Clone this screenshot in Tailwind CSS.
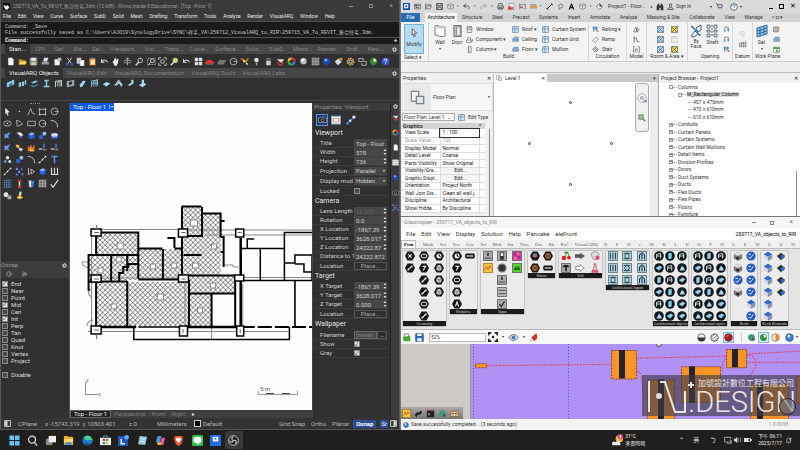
<!DOCTYPE html>
<html lang="zh-Hant">
<head>
    <meta charset="utf-8">
    <meta name="viewport" content="width=device-width, initial-scale=1">
    <title>Desktop</title>
    <script src="https://cdn.jsdelivr.net/npm/@tailwindcss/browser@4"></script>
</head>
<body class="h-screen overflow-hidden flex flex-col bg-[#1f1e1c] font-[Roboto,'Noto_Sans_CJK_TC',sans-serif] text-[5px] leading-none">

<!-- icon shapes -->
<svg class="hidden">
    <symbol id="new" viewBox="0 0 12 12"><path fill="#f4f4f4" d="M3 1h5l2 2v8H3z"/><path fill="#999" d="M8 1l2 2H8z"/></symbol>
    <symbol id="open" viewBox="0 0 12 12"><path fill="#c98a1a" d="M1 3h4l1 1h4v6H1z"/><path fill="#ffd566" d="M3 6h9l-2 4H1z"/></symbol>
    <symbol id="save" viewBox="0 0 12 12"><path fill="#8a8a8a" d="M1 1h10v10H1z"/><path fill="#eee" d="M3 1h6v4H3z"/><path fill="#d8cf9a" d="M3 7h6v4H3z"/></symbol>
    <symbol id="print" viewBox="0 0 12 12"><path fill="#ddd" d="M4 1h6L8 6H3z"/><path fill="#999" d="M1 6h9l1 4H1z"/></symbol>
    <symbol id="docprops" viewBox="0 0 12 12"><path fill="#eee" d="M2 3h7v8H2z"/><path fill="#bbb" d="M6 1h5v4H6z"/></symbol>
    <symbol id="cut" viewBox="0 0 12 12"><path stroke="#e8e8e8" d="M3 1l5 7M9 1L4 8"/><g fill="none" stroke="#4c7fe0"><circle cx="3" cy="9.500" r="1.500"/><circle cx="9" cy="9.500" r="1.500"/></g></symbol>
    <symbol id="copy" viewBox="0 0 12 12"><path fill="#ccc" d="M1 1h6v8H1z"/><path fill="#fff" stroke="#555" stroke-width=".5" d="M5 4h6v8H5z"/></symbol>
    <symbol id="paste" viewBox="0 0 12 12"><path fill="#e0a030" d="M2 2h8v9H2z"/><path fill="#f7e3b0" d="M4 4h5v6H4z"/><path fill="#888" d="M4 1h4v2H4z"/></symbol>
    <symbol id="undo" viewBox="0 0 12 12"><path fill="none" stroke="#ddd" stroke-width="1.400" d="M2 7c2-4 6-4 8 0M2 3v4h4"/></symbol>
    <symbol id="hand" viewBox="0 0 12 12"><path fill="#eee" d="M2 6l1-1 1 1V2h1v3l1-4h1v4l2-3 1 1-1 6-2 3H5z"/></symbol>
    <symbol id="orbit" viewBox="0 0 12 12"><g fill="none" stroke="#bbb"><ellipse cx="6" cy="6" rx="5" ry="2"/><path d="M6 1v10M4 3l2-2 2 2"/></g></symbol>
    <symbol id="mag" viewBox="0 0 12 12"><circle cx="7" cy="4.500" r="3" fill="none" stroke="#ddd" stroke-width="1.200"/><path stroke="#ddd" stroke-width="1.800" d="M5 7l-4 4"/></symbol>
    <symbol id="magbox" viewBox="0 0 12 12"><path fill="none" stroke="#bbb" stroke-dasharray="2 1" d="M1 2h10v8H1z"/><circle cx="7" cy="5" r="2.500" fill="none" stroke="#eee"/><path stroke="#eee" d="M5 7l-4 4"/></symbol>
    <symbol id="magall" viewBox="0 0 12 12"><path fill="none" stroke="#eee" d="M1 4V1h3M8 1h3v3M11 8v3H8M4 11H1V8"/><circle cx="6" cy="6" r="2.500" fill="none" stroke="#eee"/></symbol>
    <symbol id="magsel" viewBox="0 0 12 12"><circle cx="7" cy="4.500" r="3" fill="#d9dc3a" stroke="#ddd"/><path stroke="#ddd" stroke-width="1.800" d="M5 7l-4 4"/></symbol>
    <symbol id="grid4" viewBox="0 0 12 12"><path fill="#ddd" d="M1 1h4.500v4.500H1zM6.500 1H11v4.500H6.500zM1 6.500h4.500V11H1zM6.500 6.500H11V11H6.500z"/></symbol>
    <symbol id="car" viewBox="0 0 12 12"><path fill="#d33" d="M0 7l3-3h5l4 3v2H0z"/><path fill="#888" d="M1 9h10v1H1z"/></symbol>
    <symbol id="plane" viewBox="0 0 12 12"><path fill="#777" d="M3 4h9l-3 6H0z"/><path stroke="#d44" d="M5 3v4"/><path stroke="#4a4" d="M5 7h4"/></symbol>
    <symbol id="circ" viewBox="0 0 12 12"><circle cx="6" cy="6" r="4.500" fill="none" stroke="#ccc"/><path stroke="#ccc" d="M6 6h5"/></symbol>
    <symbol id="curvesel" viewBox="0 0 12 12"><path stroke="#e07b28" stroke-width="2" d="M1 3h4M7 7l4-5"/><path fill="#ffd040" d="M4 4h3v3H4z"/><path fill="#eee" d="M7 7l4 2-2 2z"/></symbol>
    <symbol id="bulb" viewBox="0 0 12 12"><circle cx="6" cy="4" r="3" fill="#ddd"/><path fill="#999" d="M5 7h2v4H5z"/></symbol>
    <symbol id="lock" viewBox="0 0 12 12"><path fill="none" stroke="#999" d="M4 5V2h4v3"/><path fill="#ccc" d="M3 5h6v6H3z"/></symbol>
    <symbol id="layers" viewBox="0 0 12 12"><path fill="#ddd" d="M1 3h10l-4 5z"/><path fill="#d33" d="M1 5l5 5 5-5-2 5-3 2-3-2z"/></symbol>
    <symbol id="wheel" viewBox="0 0 12 12"><g fill="none" stroke-width="2.500"><path stroke="#e33" d="M6 2a4 4 0 014 4"/><path stroke="#4a7bff" d="M10 6a4 4 0 01-4 4"/><path stroke="#3b3" d="M6 10a4 4 0 01-4-4"/><path stroke="#eb3" d="M2 6a4 4 0 014-4"/></g></symbol>
    <symbol id="ball" viewBox="0 0 12 12"><circle cx="6" cy="5.500" r="4.300" fill="#bbb"/><circle cx="5" cy="4" r="2" fill="#fff"/></symbol>
    <symbol id="mesh" viewBox="0 0 12 12"><path fill="#aaa" d="M1 1h10v10H1z"/><path stroke="#444" stroke-width=".7" d="M1 4h10M1 8h10M4 1v10M8 1v10"/></symbol>
    <symbol id="blue" viewBox="0 0 12 12"><circle cx="6" cy="6" r="4.600" fill="#1e49b8"/><circle cx="5" cy="4" r="1.800" fill="#8fb4ff"/></symbol>
    <symbol id="spot" viewBox="0 0 12 12"><path fill="#ddd" d="M1 6l5-4 4 5-5 4z"/><path fill="#e39a35" d="M6 2l5-1v5z"/></symbol>
    <symbol id="gearY" viewBox="0 0 12 12"><circle cx="6" cy="6" r="4" fill="none" stroke="#e8b04a" stroke-width="2.500" stroke-dasharray="2 1"/><circle cx="6" cy="6" r="2" fill="none" stroke="#eee"/></symbol>
    <symbol id="dim" viewBox="0 0 12 12"><path fill="none" stroke="#ccc" d="M1 2v4h6V2H1M5 8v3h6V6H8"/></symbol>
    <symbol id="green" viewBox="0 0 12 12"><circle cx="6" cy="6" r="4.600" fill="#2f8f2c"/><path fill="#eee" d="M6 2a4 4 0 014 4L6 6z"/></symbol>
    <symbol id="help" viewBox="0 0 12 12"><circle cx="6" cy="6" r="5" fill="#3457d8"/><path fill="none" stroke="#fff" stroke-width="1.300" d="M4 5c0-3 4-3 4-1 0 1.500-2 1.500-2 3M6 8.500v1"/></symbol>

    <symbol id="va1" viewBox="0 0 12 12"><path fill="#86cbe4" d="M1 5l9-4 1 1v5l-9 4-1-1z"/><path fill="#2f7391" d="M4 7l4-2v3L4 10z"/></symbol>
    <symbol id="va2" viewBox="0 0 12 12"><path fill="#86cbe4" d="M1 5l3-1v6l-3 1zM5 4l3-1v6L5 10zM9 2l2-1v6L9 8z"/></symbol>
    <symbol id="va3" viewBox="0 0 12 12"><path fill="#86cbe4" d="M1 5l6-3 4 1-6 3z"/><path fill="#3f8aa8" d="M1 8l5 1 5-3v2l-6 3-4-1z"/></symbol>
    <symbol id="va4" viewBox="0 0 12 12"><path fill="#86cbe4" d="M3 1h6v2H3zM5 3h2v6H5zM2 9h8v2H2z"/></symbol>
    <symbol id="va5" viewBox="0 0 12 12"><path fill="none" stroke="#c9cfd2" stroke-width="1.300" d="M2 11V3l8-1v8M5 10V4l3-1v7"/></symbol>
    <symbol id="va6" viewBox="0 0 12 12"><path fill="#9aa5aa" d="M1 3l10-2v8L1 11z"/><path fill="#2c3336" d="M4 4l4-1v4L4 8z"/></symbol>
    <symbol id="va7" viewBox="0 0 12 12"><path fill="#9fdbf2" d="M2 8l5-6 3 1-4 7-3 1z"/></symbol>
    <symbol id="va8" viewBox="0 0 12 12"><path fill="none" stroke="#86cbe4" stroke-width="1.200" d="M1 3l10-2M2 3v8M5 2v8M8 2v8M10 1v8M2 6l8-1"/></symbol>
    <symbol id="va9" viewBox="0 0 12 12"><path fill="#9fdbf2" d="M1 7l5-3 5 2-5 4z"/></symbol>
    <symbol id="va10" viewBox="0 0 12 12"><path fill="none" stroke="#a9cfdc" stroke-width="1.600" d="M1 9l5-7 5 6M3 9l4-5 3 6"/></symbol>
    <symbol id="va11" viewBox="0 0 12 12"><path fill="#9fdbf2" d="M7 1h3v5L5 9l-3-1 5-3z"/></symbol>
    <symbol id="va12" viewBox="0 0 12 12"><path fill="#9fdbf2" d="M5 1h3v4l3 2-5 4-5-3 4-2z"/></symbol>

    <symbol id="arrow" viewBox="0 0 12 12"><path fill="#eee" d="M3 1l6 6-3 .2L7.500 11 6 11.500 4.500 8 3 9.500z"/></symbol>
    <symbol id="point" viewBox="0 0 12 12"><circle cx="6" cy="6" r="1" fill="#ccc"/></symbol>
    <symbol id="poly" viewBox="0 0 12 12"><path fill="none" stroke="#ccc" d="M1 11l4-9 2 6 4 2"/></symbol>
    <symbol id="ctrl" viewBox="0 0 12 12"><path fill="none" stroke="#ccc" d="M2 3h8v7H2z"/><path fill="#ccc" d="M1 2h2v2H1zM9 2h2v2H9zM1 9h2v2H1zM9 9h2v2H9z"/></symbol>
    <symbol id="ell" viewBox="0 0 12 12"><ellipse cx="6" cy="6" rx="5" ry="3.500" fill="none" stroke="#ccc"/><path fill="#ccc" d="M5 5h2v2H5z"/></symbol>
    <symbol id="tri" viewBox="0 0 12 12"><path fill="none" stroke="#ccc" d="M2 2c4 0 7 3 8 5L3 10z"/></symbol>
    <symbol id="rect" viewBox="0 0 12 12"><path fill="none" stroke="#ccc" d="M1 3h10v6H1z"/></symbol>
    <symbol id="arc" viewBox="0 0 12 12"><path fill="none" stroke="#ccc" stroke-width="1.300" d="M1 2c6 0 9 3 9 9"/></symbol>
    <symbol id="srf" viewBox="0 0 12 12"><path fill="#3f6fe0" d="M2 4l7-2-2 7-5 1z"/><path stroke="#dfe8ff" stroke-width=".8" d="M2 9l7-7M2 4l6 6"/></symbol>
    <symbol id="srf2" viewBox="0 0 12 12"><path fill="#e8eeff" d="M2 2h6l3 4-3 1-3-2z"/><path fill="#3f6fe0" d="M5 7l5-1-2 4z"/></symbol>
    <symbol id="cube" viewBox="0 0 12 12"><path fill="#2a5bd8" d="M2 4l4-2 4 1v6l-4 2-4-2z"/><path fill="#9cc0ff" d="M2 4l4-2 4 1-4 3z"/></symbol>
    <symbol id="balls" viewBox="0 0 12 12"><circle cx="4" cy="8" r="3" fill="#2a5bd8"/><circle cx="8.500" cy="3.500" r="2.500" fill="#a5c3ff"/></symbol>
    <symbol id="cyl" viewBox="0 0 12 12"><path fill="#3f6fe0" d="M2 5h8v5H2z"/><ellipse cx="6" cy="5" rx="4.500" ry="2.500" fill="#cfdfff"/></symbol>
    <symbol id="puz" viewBox="0 0 12 12"><path fill="#f4c04a" d="M1 2l5 1-1 4-3-1z"/><path fill="#ddd" d="M6 6l5 2-3 3-3-2z"/></symbol>
    <symbol id="fire" viewBox="0 0 12 12"><path fill="#e8702a" d="M1 11V4l2 2 2-4 2 4 3-4v9z"/><path fill="#ffd23c" d="M3 11l2-4 2 3 2-2v3z"/></symbol>
    <symbol id="trim" viewBox="0 0 12 12"><path stroke="#ddd" stroke-width="1.500" d="M1 8h5"/><path fill="#4b7be8" d="M7 1h2v6H7z"/><path stroke="#ddd" d="M7 9h4"/></symbol>
    <symbol id="dots" viewBox="0 0 12 12"><circle cx="6" cy="3.500" r="2.300" fill="#eee"/><circle cx="3" cy="8.500" r="2" fill="#5a8cf0"/><circle cx="9" cy="8.500" r="2" fill="#ddd"/></symbol>
    <symbol id="tee" viewBox="0 0 12 12"><path fill="#5a8cf0" d="M2 1h8v2H7v8H5V3H2z"/></symbol>
    <symbol id="nodes" viewBox="0 0 12 12"><path stroke="#ccc" d="M2 10l8-8"/><path fill="#eee" d="M1 9h2v2H1zM5 5h2v2H5zM9 1h2v2H9z"/></symbol>
    <symbol id="nodesB" viewBox="0 0 12 12"><path fill="#5a8cf0" d="M1 1h3v3H1zM8 2h2v2H8zM4 5h3v3H4zM9 8h2v3H9zM1 9h3v2H1z"/></symbol>
    <symbol id="wrench" viewBox="0 0 12 12"><path fill="none" stroke="#ddd" d="M2 1v9l3-2M5 3l5 3-4 3z"/></symbol>
    <symbol id="bars" viewBox="0 0 12 12"><path stroke="#ddd" stroke-width="1.500" fill="none" d="M2 1v9M6 1v9M10 1v9M1 10h10"/></symbol>
    <symbol id="array" viewBox="0 0 12 12"><path stroke="#5f7fc0" stroke-width="2" stroke-dasharray="2 1" d="M1 2h10M1 5h10M1 8h10M1 11h10"/></symbol>
    <symbol id="red3" viewBox="0 0 12 12"><path fill="#d33" d="M4 1h4v3H4zM4 9h4v3H4z"/><path fill="#ddd" d="M5 4h2v5H5z"/></symbol>
    <symbol id="bluepg" viewBox="0 0 12 12"><path fill="#cfdfff" d="M2 2h4v9H3z"/><path fill="#4477ea" d="M6 3l4-1-2 9H6z"/></symbol>
    <symbol id="check" viewBox="0 0 12 12"><path fill="none" stroke="#eee" stroke-width="1.500" d="M1 7l3 4 7-10"/></symbol>
    <symbol id="cap" viewBox="0 0 12 12"><circle cx="4" cy="5" r="3.300" fill="#ddd"/><path fill="#aaa" d="M6 6h5v5H6z"/></symbol>
    <symbol id="cone" viewBox="0 0 12 12"><path fill="#ddd" d="M6 1h3L8 6H5z"/><path fill="#f2c34b" d="M2 9l4-4 5 4-5 2z"/></symbol>
    <symbol id="gear" viewBox="0 0 12 12"><circle cx="6" cy="6" r="3.500" fill="none" stroke="#eee" stroke-width="2.400"/><circle cx="6" cy="6" r="5" fill="none" stroke="#eee" stroke-width="1.400" stroke-dasharray="2 2"/></symbol>
    <symbol id="cam" viewBox="0 0 12 12"><path fill="#111" stroke="#aaa" d="M1 4h2l1-1h4l1 1h2v6H1z"/><circle cx="6" cy="7" r="2" fill="none" stroke="#bbb"/></symbol>
    <symbol id="frame" viewBox="0 0 12 12"><path fill="#fff" stroke="#8fc1de" stroke-width="1.500" d="M1 1.500h10v9H1z"/><path fill="none" stroke="#e0704a" d="M3 4h6v4H3z"/></symbol>
    <symbol id="joint" viewBox="0 0 12 12"><path stroke="#3465e0" stroke-width="2" d="M2 10l7-7"/><circle cx="9.500" cy="2.500" r="2" fill="#dfe8ff"/><circle cx="5" cy="7" r="1.500" fill="#dfe8ff"/><circle cx="2" cy="10" r="1.500" fill="#5a8cf0"/></symbol>

    <symbol id="rlogo" viewBox="0 0 12 12"><path fill="#1650b8" d="M0 0h12v12H0z"/><path fill="#fff" d="M2 2h7v7H2z"/><path fill="#1650b8" d="M4 4h3v3H4z"/></symbol>
    <symbol id="home" viewBox="0 0 12 12"><path fill="none" stroke="#444" d="M1 2h10v8H1z"/><path fill="#444" d="M2 3h4v3H2zM7 4h3v1H7zM3 7h6v1H3z"/></symbol>
    <symbol id="lopen" viewBox="0 0 12 12"><path fill="none" stroke="#444" d="M1 10V2h3l1 1h5v2M1 10l2-5h8l-2 5z"/></symbol>
    <symbol id="lsave" viewBox="0 0 12 12"><path fill="none" stroke="#333" stroke-width="1.300" d="M1 1h10v10H1zM3 1v4h6V1M3 11V7h6v4"/></symbol>
    <symbol id="lcube" viewBox="0 0 12 12"><path fill="none" stroke="#777" d="M1 3l5-2 5 2v6l-5 2-5-2zM1 3l5 2 5-2M6 5v6"/></symbol>
    <symbol id="lundo" viewBox="0 0 12 12"><path fill="none" stroke="#333" stroke-width="1.300" d="M5 1L1 5l4 3M1 5h6c5 0 4 5 2 6"/></symbol>
    <symbol id="lredo" viewBox="0 0 12 12"><path fill="none" stroke="#999" stroke-width="1.300" d="M7 1l4 4-4 3M11 5H5c-5 0-4 5-2 6"/></symbol>
    <symbol id="lprint" viewBox="0 0 12 12"><path fill="none" stroke="#333" d="M3 5V1h6v4M1 5h10v4H1zM3 8h6v3H3z"/></symbol>
    <symbol id="pdf" viewBox="0 0 12 12"><path fill="#fff" stroke="#777" d="M2 1h8v10H2z"/><path fill="#d33" d="M0 6h6v5H0zM7 6l3 4H6z"/></symbol>
    <symbol id="meas" viewBox="0 0 12 12"><path stroke="#555" fill="none" d="M1 1v10M11 1v10M1 3h10M4 6l4 4"/><path fill="#c44" d="M2 6h4v3H2z"/></symbol>
    <symbol id="ruler" viewBox="0 0 12 12"><path fill="#e0a63c" stroke="#777" stroke-width=".6" d="M0 5h12v4H0z"/><path stroke="#555" d="M1 3h10"/></symbol>
    <symbol id="lline" viewBox="0 0 12 12"><path stroke="#222" stroke-width="1.500" d="M2 10l8-8M0 8l4 4M8 0l4 4"/></symbol>
    <symbol id="tag" viewBox="0 0 12 12"><path fill="none" stroke="#333" d="M4 8C1 4 5 1 8 2s3 6-1 6L2 11"/></symbol>
    <symbol id="letA" viewBox="0 0 12 12"><path fill="none" stroke="#111" stroke-width="2" d="M2 11l4-9 4 9M3.500 8h5"/></symbol>
    <symbol id="sect" viewBox="0 0 12 12"><path fill="#fff" stroke="#333" d="M6 1l5 5-5 5-5-5z"/><path fill="#333" d="M6 1l5 5H6z"/></symbol>
    <symbol id="bino" viewBox="0 0 12 12"><path fill="#333" d="M1 5l2-4h2v3h2V1h2l2 4v6H7V7H5v4H1z"/></symbol>
    <symbol id="user" viewBox="0 0 12 12"><path fill="none" stroke="#333" stroke-width="1.200" d="M4 4a2 3 0 014 0 2 3 0 01-4 0M1 11c0-4 10-4 10 0z"/></symbol>
    <symbol id="cart" viewBox="0 0 12 12"><path fill="none" stroke="#335" stroke-width="1.200" d="M0 1h2l2 7h6l1-5H3M4 10h1M9 10h1"/></symbol>
    <symbol id="lhelp" viewBox="0 0 12 12"><circle cx="6" cy="6" r="5" fill="#fff" stroke="#333"/><path fill="none" stroke="#236ab5" stroke-width="1.200" d="M4 5c0-3 4-3 4-1 0 1.500-2 1.500-2 3M6 8.500v1"/></symbol>

    <symbol id="wall" viewBox="0 0 12 14"><path fill="#fff" stroke="#555" stroke-width=".8" d="M1 2c3-2 5 2 10 1v9c-5 2-6-1-10-1z"/><path fill="#ccc" d="M1 2l10 1v2L1 4z"/></symbol>
    <symbol id="door" viewBox="0 0 12 14"><path fill="#bbb" stroke="#555" stroke-width=".8" d="M2 1h8v12H2z"/><path fill="#eef" stroke="#555" stroke-width=".6" d="M5 3l4-1v11l-4-2z"/></symbol>
    <symbol id="win" viewBox="0 0 12 12"><path fill="#eef3f8" stroke="#556" d="M2 1h8v10H2zM2 6h8M2 3h8"/></symbol>
    <symbol id="comp" viewBox="0 0 12 12"><path fill="#fff" stroke="#555" d="M1 7h8v4H1zM3 7V3h5v4M9 9h2V5"/></symbol>
    <symbol id="col" viewBox="0 0 12 12"><path fill="#fff" stroke="#555" d="M4 1h5v10H4zM5 1v10"/></symbol>
    <symbol id="cw" viewBox="0 0 12 12"><path fill="#d9ebf8" stroke="#3a6f9c" d="M1 1h10v10H1zM1 5h10M5 1v10"/></symbol>
    <symbol id="ceil" viewBox="0 0 12 12"><path fill="#7fb4dc" stroke="#37648c" stroke-width=".8" d="M1 5l3-3h7l-2 4H1zM1 8h8l2-3v4H1z"/></symbol>
    <symbol id="rail" viewBox="0 0 12 12"><path fill="none" stroke="#2f6aa5" stroke-width="1.300" d="M1 2h8v3H1M3 2v8M7 2v6"/><path fill="#d66" d="M8 7h3v3H8z"/></symbol>
    <symbol id="ramp" viewBox="0 0 12 12"><path fill="#fff" stroke="#555" d="M1 8l6-6 4 3-5 6z"/></symbol>
    <symbol id="stair" viewBox="0 0 12 12"><path fill="#ddd" stroke="#555" d="M1 6l5-5 5 5-5 5zM3 4l5 5M5 3l5 5"/></symbol>
    <symbol id="mtext" viewBox="0 0 12 12"><path fill="none" stroke="#444" d="M1 10l4-8 2 8zM7 10l4-3-4-4z"/></symbol>
    <symbol id="mline" viewBox="0 0 12 12"><path fill="none" stroke="#444" stroke-width="1.200" d="M2 1v10M2 3l4 1 1 5 4 1"/></symbol>
    <symbol id="mgrp" viewBox="0 0 12 12"><path fill="none" stroke="#555" d="M3 1H1v10h2M9 1h2v10H9M4 5h3v4H4z"/></symbol>
    <symbol id="room" viewBox="0 0 12 12"><path fill="#b9d8ef" stroke="#445" d="M1 1h10v10H1z"/><path stroke="#24598a" d="M1 1l10 10M11 1L1 11"/></symbol>
    <symbol id="area" viewBox="0 0 12 12"><path fill="#f1d54d" stroke="#445" d="M1 1h10v10H1z"/><path stroke="#445" d="M1 1l10 10M11 1L1 11"/></symbol>
    <symbol id="tagg" viewBox="0 0 12 12"><path fill="#eee" stroke="#bbb" d="M1 1h10v10H1zM4 4h5"/></symbol>
    <symbol id="wview" viewBox="0 0 12 12"><path fill="#fff" stroke="#3f7a3f" d="M1 2h10v9H1z"/><path fill="#5a9a55" d="M1 2h10v3H1zM5 7h4v3H5z"/></symbol>
    <symbol id="byface" viewBox="0 0 12 14"><path fill="none" stroke="#4a5a68" d="M1 12l4-5 3 3-4 3zM6 4l5-3v5l-3 2zM1 2l3 3M9 12l2-2"/><path stroke="#2f7ac0" stroke-width="1.300" d="M2 2l8 10"/></symbol>
    <symbol id="shaft" viewBox="0 0 12 14"><path fill="#d5e6f3" stroke="#4a5a68" stroke-width=".8" d="M1 1h3v3H1zM1 6h3v2H1zM1 10h3v3H1zM8 1h3v3H8zM8 6h3v2H8zM8 10h3v3H8z"/><path stroke="#4a5a68" d="M6 1v12" stroke-dasharray="2 1"/></symbol>
    <symbol id="dorm" viewBox="0 0 12 12"><path fill="#7fb4dc" d="M1 6h4v4H1zM7 5h4v3H7z"/><path fill="none" stroke="#555" d="M3 6V2h6v8"/></symbol>
    <symbol id="grids" viewBox="0 0 12 12"><path fill="none" stroke="#667" d="M1 11V4M4 11V3M7 11V2M10 11V1M1 5h10M1 9h10"/></symbol>
    <symbol id="wset" viewBox="0 0 12 14"><path fill="#8cc4e8" stroke="#2f6f9f" d="M1 4l10-3v9L1 13zM1 7l10-3M1 10l10-3M4 3v9M8 2v9"/></symbol>
    <symbol id="wshow" viewBox="0 0 12 12"><path fill="#bbb" stroke="#555" d="M1 2h8v8H1z"/><path fill="#e59a3a" d="M8 1h3v4H8z"/></symbol>
    <symbol id="pages" viewBox="0 0 12 12"><path fill="#f2f2f2" stroke="#666" stroke-width=".8" d="M1 1h6v8H1z"/><path fill="#dfe6ee" stroke="#666" stroke-width=".8" d="M5 5h6v6H5z"/></symbol>

    <symbol id="h1" viewBox="0 0 12 12"><path fill="#151515" d="M3 .500h6l3 5.500-3 5.500H3L0 6z"/><path fill="none" stroke="#eee" stroke-width="1.300" d="M4 4l4 4M8 4L4 8"/></symbol>
    <symbol id="h2" viewBox="0 0 12 12"><path fill="#151515" d="M3 .500h6l3 5.500-3 5.500H3L0 6z"/><path stroke="#eee" stroke-width="1.500" d="M4 8l4-4"/><path fill="#eee" d="M3 7h2v2H3zM7 3h2v2H7z"/></symbol>
    <symbol id="h3" viewBox="0 0 12 12"><path fill="#151515" d="M3 .500h6l3 5.500-3 5.500H3L0 6z"/><ellipse cx="6" cy="6" rx="3.500" ry="2.300" fill="none" stroke="#eee" stroke-width="1.200"/></symbol>
    <symbol id="h4" viewBox="0 0 12 12"><path fill="#151515" d="M3 .500h6l3 5.500-3 5.500H3L0 6z"/><path fill="#ccc" d="M3 4l3-2 3 2v4L6 10 3 8z"/><path stroke="#444" stroke-width=".7" fill="none" d="M3 4l3 2 3-2M6 6v4"/></symbol>
    <symbol id="h5" viewBox="0 0 12 12"><path fill="#151515" d="M3 .500h6l3 5.500-3 5.500H3L0 6z"/><path fill="none" stroke="#eee" stroke-width="1.300" d="M4 4h4L5 9"/></symbol>
    <symbol id="h6" viewBox="0 0 12 12"><path fill="#151515" d="M3 .500h6l3 5.500-3 5.500H3L0 6z"/><circle cx="6" cy="6" r="3" fill="#eee"/><path stroke="#222" d="M6 4v2l2 1"/></symbol>
    <symbol id="h7" viewBox="0 0 12 12"><path fill="#151515" d="M3 .500h6l3 5.500-3 5.500H3L0 6z"/><path fill="none" stroke="#eee" stroke-width="1.200" d="M4 9l2-6 2 6M5 7h2"/></symbol>
    <symbol id="h8" viewBox="0 0 12 12"><path fill="#151515" d="M1 3h10l1 3-1 3H1L0 6z"/><path fill="#aaa" d="M2 5h8v2H2z"/></symbol>
    <symbol id="g1" viewBox="0 0 12 12"><path fill="#aaa" stroke="#555" d="M.5.500h11v11H.5z"/><path fill="#333" d="M5 2h2v4H5zM2 8h8v1H2z"/></symbol>
    <symbol id="g2" viewBox="0 0 12 12"><path fill="#aaa" stroke="#555" d="M.5.500h11v11H.5z"/><path fill="#fff" stroke="#333" d="M4 2h4v8H4z"/><path fill="#333" d="M4 6h4v4H4z"/></symbol>
    <symbol id="g3" viewBox="0 0 12 12"><circle cx="6" cy="6" r="5.500" fill="#777"/><circle cx="6" cy="6" r="4" fill="#333"/></symbol>
    <symbol id="g4" viewBox="0 0 12 12"><path fill="#bbb" stroke="#555" d="M.5.500h11v11H.5z"/><path stroke="#333" d="M2 4h8M2 8h8"/></symbol>
    <symbol id="g5" viewBox="0 0 12 12"><path fill="#aaa" stroke="#555" d="M.5.500h11v11H.5z"/><path fill="none" stroke="#222" stroke-width="1.500" d="M3 6l2 3 4-6"/></symbol>
    <symbol id="yel" viewBox="0 0 12 12"><path fill="#f7c842" stroke="#a36a15" d="M.5.500h11v11H.5z"/><path fill="none" stroke="#c4561c" d="M2 9l2-5 2 4 2-5 2 4"/></symbol>
    <symbol id="pink" viewBox="0 0 12 12"><path fill="#e0429c" stroke="#555" d="M.5.500h11v11H.5z"/><path fill="#8c2f9b" d="M2 2h3v3H2zM7 6h3v3H7z"/><path fill="#f39acb" d="M6 2h2v2H6zM3 8h2v2H3z"/></symbol>
    <symbol id="grn" viewBox="0 0 12 12"><path fill="#58d435" stroke="#555" d="M.5.500h11v11H.5z"/><path fill="#1d5f1d" d="M2 9l3-6 1 4 2-4 2 6-3-1z"/></symbol>
    <symbol id="hor" viewBox="0 0 12 12"><path fill="#151515" d="M3 .500h6l3 5.500-3 5.500H3L0 6z"/><circle cx="6" cy="6" r="3.500" fill="#a86a38"/><path stroke="#553216" d="M3 4l6 4M3 8l6-4"/></symbol>
    <symbol id="hrb" viewBox="0 0 12 12"><path fill="#151515" d="M3 .500h6l3 5.500-3 5.500H3L0 6z"/><path fill="#4a8ae0" d="M3 3h6l-3 6z"/><path fill="#e0603a" d="M3 5h6v2H3z"/></symbol>
    <symbol id="cherry" viewBox="0 0 12 12"><path fill="none" stroke="#3b8a2c" d="M4 8l4-7 2 6"/><path fill="#3b8a2c" d="M4 1h4v2H4z"/><circle cx="3.500" cy="8.500" r="2.700" fill="#d8242e"/><circle cx="9.500" cy="8" r="2.300" fill="#d8242e"/></symbol>
    <symbol id="arrD" viewBox="0 0 12 12"><path fill="#555" d="M0 4h6V2l6 4-6 4V8H0z"/></symbol>
    <symbol id="arrL" viewBox="0 0 12 12"><path fill="#fff" stroke="#777" d="M1 4h5V2l5 4-5 4V8H1z"/></symbol>
    <symbol id="tree1" viewBox="0 0 12 12"><path fill="#aaa" stroke="#555" d="M.5.500h11v11H.5z"/><path fill="#222" d="M2 5c0-4 8-4 8 0zM5 5h2v5H5z"/></symbol>
    <symbol id="skull" viewBox="0 0 12 12"><path fill="#ddd" stroke="#888" d="M1 4c2-4 8-4 10 0l-2 6H4z"/><circle cx="9" cy="8" r="2.500" fill="#d94a86"/></symbol>
    <symbol id="flask" viewBox="0 0 12 12"><path fill="#f5dbe5" stroke="#a55" d="M5 1h2v4l3 6H2l3-6z"/><path fill="#e0527e" d="M4 8h4l2 3H2z"/></symbol>
    <symbol id="ai1" viewBox="0 0 12 12"><path fill="#b5d5dd" stroke="#4c6970" d="M.5.500h11v11H.5z"/><path stroke="#23495a" stroke-width="1.300" d="M3 2v8M6 2v8M9 2v8"/></symbol>
    <symbol id="ai2" viewBox="0 0 12 12"><path fill="#b5d5dd" stroke="#4c6970" d="M.5.500h11v11H.5z"/><path fill="none" stroke="#1d3a48" d="M2 3h8M2 9h8M6 2l-3 4 3 4 3-4z"/></symbol>
    <symbol id="ai3" viewBox="0 0 12 12"><path fill="#b5d5dd" stroke="#4c6970" d="M.5.500h11v11H.5z"/><path fill="none" stroke="#1d3a48" stroke-width="1.300" d="M3 10V5l3-3 3 3v5M6 4v6"/></symbol>
    <symbol id="ao1" viewBox="0 0 12 12"><circle cx="6" cy="6" r="5.800" fill="#10181c"/><path fill="#8fd0ea" d="M2 6l5-3 3 2-4 4z"/></symbol>
    <symbol id="ao2" viewBox="0 0 12 12"><circle cx="6" cy="6" r="5.800" fill="#10181c"/><path fill="#8fd0ea" d="M4 3l4-1v7l-4 1z"/></symbol>
    <symbol id="ao3" viewBox="0 0 12 12"><circle cx="6" cy="6" r="5.800" fill="#10181c"/><path fill="none" stroke="#c6d6dc" stroke-width="1.200" d="M3 9V4l5-1v6M3 6h6"/></symbol>
    <symbol id="ao4" viewBox="0 0 12 12"><circle cx="6" cy="6" r="5.800" fill="#10181c"/><path fill="#a9dcf0" d="M3 9l3-6 3 4v2z"/></symbol>
    <symbol id="rv1" viewBox="0 0 12 12"><circle cx="6" cy="6" r="5.500" fill="#2558c4"/><path fill="none" stroke="#e2ecff" stroke-width="1.200" d="M3 7l2 2 4-5M3 4h3"/></symbol>
    <symbol id="rv2" viewBox="0 0 12 12"><path fill="#777" d="M1 4l5-3 5 3v5l-5 3-5-3z"/><path fill="#ddd" d="M1 4l5-3 5 3-5 2z"/><path fill="#222" d="M4 7h3v3H4z"/></symbol>
    <symbol id="rv3" viewBox="0 0 12 12"><path fill="#cfd6e2" d="M1 4l5-3 5 3v5l-5 3-5-3z"/><path fill="#2f66d0" d="M1 4l5-3 5 3-5 3z"/><path fill="#8794ab" d="M6 7l5-3v5l-5 3z"/></symbol>
    <symbol id="rv4" viewBox="0 0 12 12"><path fill="#333" d="M1 6l5-4 5 4-5 5z"/><path fill="#2f66d0" d="M6 5h4v4H6z"/></symbol>

    <symbol id="gopen" viewBox="0 0 12 12"><path fill="#eee" stroke="#777" d="M3 1h6v7H3z"/><path fill="#4aa832" d="M1 5l10-1v7H2z"/></symbol>
    <symbol id="gsave" viewBox="0 0 12 12"><path fill="#2a67bf" stroke="#163c77" d="M1 1h10v10H1z"/><path fill="#fff" d="M3 7h6v4H3zM3 1h6v3H3z"/></symbol>
    <symbol id="gzoom" viewBox="0 0 12 12"><path fill="none" stroke="#222" stroke-width="2" d="M1 4V1h3M8 1h3v3M11 8v3H8M4 11H1V8"/><circle cx="6" cy="6" r="1.500" fill="#222"/></symbol>
    <symbol id="eye" viewBox="0 0 14 12"><path fill="#fff" stroke="#336" d="M1 6c3-5 9-5 12 0-3 5-9 5-12 0z"/><circle cx="7" cy="6" r="2.800" fill="#3485c4"/></symbol>
    <symbol id="pen" viewBox="0 0 12 12"><path fill="#d5302a" d="M3 6l7-6 1 7-4 4z"/><path fill="#999" d="M1 8l4 3H2z"/></symbol>
    <symbol id="bw" viewBox="0 0 12 12"><circle cx="6" cy="6" r="5" fill="#eee" stroke="#444"/><path fill="#333" d="M1 6h10a5 5 0 01-10 0z"/></symbol>
    <symbol id="wire" viewBox="0 0 12 12"><circle cx="6" cy="6" r="5" fill="#fff" stroke="#444"/><path stroke="#444" d="M2 9l8-6M1 6l6-5M5 11l6-5"/></symbol>
    <symbol id="redg" viewBox="0 0 12 12"><circle cx="6" cy="6" r="5" fill="#b3211d" stroke="#611"/><path stroke="#f77" d="M3 5l4-3"/></symbol>
    <symbol id="teal" viewBox="0 0 12 12"><circle cx="6" cy="6" r="4.500" fill="#4b8f8a"/><path fill="#2a4" d="M3 3h4v4H3z"/><path fill="#355" d="M7 7h3v3H7z"/></symbol>
    <symbol id="half" viewBox="0 0 12 12"><circle cx="6" cy="6" r="5" fill="#f2e9dc" stroke="#777"/><path fill="#e88a2a" d="M6 1v10A5 5 0 006 1z"/></symbol>
    <symbol id="bball" viewBox="0 0 12 12"><circle cx="6" cy="6" r="5" fill="#3d86dd" stroke="#246"/><circle cx="5" cy="4" r="2" fill="#cfe5ff"/></symbol>

    <symbol id="tstart" viewBox="0 0 12 12"><path fill="#63c3f2" d="M.5.500h5v5h-5zM6.500.500h5v5h-5zM.5 6.500h5v5h-5zM6.500 6.500h5v5h-5z"/></symbol>
    <symbol id="tsearch" viewBox="0 0 12 12"><circle cx="5.500" cy="5" r="3.800" fill="none" stroke="#ddd" stroke-width="1.300"/><path stroke="#ddd" stroke-width="1.400" d="M8 8l3 3.500"/></symbol>
    <symbol id="ttask" viewBox="0 0 12 12"><path fill="#888" d="M1 4h7v7H1z"/><path fill="#eee" d="M4 1h8v7H4z"/></symbol>
    <symbol id="tfold" viewBox="0 0 12 12"><path fill="#e9a825" d="M1 1h4l1 1h5v9H1z"/><path fill="#ffd867" d="M1 4h10v4H1z"/><path fill="#3b8ee0" d="M3 8h6v3H3z"/></symbol>
    <symbol id="tedge" viewBox="0 0 12 12"><circle cx="6" cy="6" r="5.500" fill="#1b7cc9"/><path fill="#4fd08b" d="M2 3c3-4 9-2 9.500 3C9 5 7 5 5 6z"/><path fill="#0d4d94" d="M4 6c0 4 4 4 6 3-2 4-8 2-6-3z"/></symbol>
    <symbol id="tstore" viewBox="0 0 12 12"><path fill="#f2f2f2" d="M0 3h12v8H0z"/><path fill="none" stroke="#49a9e8" d="M4 3V1h4v2"/><path fill="#e24" d="M3 4h2.500v2.500H3z"/><path fill="#3a3" d="M6.500 4H9v2.500H6.500z"/><path fill="#28c" d="M3 7.500h2.500v2.500H3z"/><path fill="#eb2" d="M6.500 7.500H9v2.500H6.500z"/></symbol>
    <symbol id="tL" viewBox="0 0 12 12"><path fill="#1c57b8" d="M0 1h11v11H0z"/><path fill="none" stroke="#fff" stroke-width="1.500" d="M3.500 4v5.500h4"/><circle cx="9.500" cy="2.500" r="2.500" fill="#5cb0f5"/></symbol>
    <symbol id="tnote" viewBox="0 0 12 12"><path fill="#8ccbe0" d="M3 1l8 1-2 9-8-1z"/><path stroke="#e8f6fb" d="M4 4l5 .5M3.500 7l5 .5"/></symbol>
    <symbol id="tcop" viewBox="0 0 12 12"><path fill="#3aa0e8" d="M3 1h4L5 8H1z"/><path fill="#e25a9c" d="M7 3h4L9 11H5z"/><path fill="#f2b53a" d="M2 8h5l-1 3H3z"/></symbol>
    <symbol id="tbrave" viewBox="0 0 12 12"><path fill="#f0502c" d="M2 1h8l1 3-2 6-3 2-3-2-2-6z"/><path fill="#fff" d="M4 3h4l1 2-3 4-3-4z"/></symbol>
    <symbol id="tline" viewBox="0 0 12 12"><rect width="12" height="12" rx="2" fill="#2fc24a"/><ellipse cx="6" cy="5.500" rx="4.500" ry="3.500" fill="#fff"/><path fill="#fff" d="M6 11l3-3H5z"/></symbol>
    <symbol id="trevit" viewBox="0 0 12 12"><path fill="#1d6fe0" d="M0 0h12v12H0z"/><path fill="#fff" d="M3 2h6v5H3z"/><path fill="#1d6fe0" d="M5 3h2v2H5z"/></symbol>
    <symbol id="tobs" viewBox="0 0 12 12"><circle cx="6" cy="6" r="5.300" fill="#222" stroke="#ccc"/><path fill="none" stroke="#ccc" stroke-width="1.200" d="M6 6C3 5 4 2 6 2M6 6c3-1 4 2 2 4M6 6c-1 3-4 2-4 0"/></symbol>
    <symbol id="tcast" viewBox="0 0 12 12"><path fill="none" stroke="#ddd" d="M7 9H1V2h9v3M4 11h4M9 7v4h2V7z"/></symbol>
    <symbol id="tvol" viewBox="0 0 12 12"><path fill="#ddd" d="M0 4h2l3-3v10L2 8H0z"/><path fill="none" stroke="#ddd" d="M7 4v4M9 2.500c2 2 2 5 0 7"/></symbol>
    <symbol id="tbat" viewBox="0 0 12 12"><path fill="#ddd" d="M0 3h10v6H0zM10 5h2v2h-2z"/><path fill="#222" d="M7 4h2v4H7z"/></symbol>
    <symbol id="tbell" viewBox="0 0 12 12"><path fill="none" stroke="#ddd" d="M2 9l1-2V4c1-3 5-3 6 0v3l1 2zM5 11h2M8 2h3L8 5h3"/></symbol>
    <symbol id="tweather" viewBox="0 0 14 14"><circle cx="9" cy="5" r="4" fill="#f4b63c"/><path fill="#e8eef5" d="M1 11c0-3 3-4 4-2 3-3 6 0 5 3H2z"/><circle cx="10" cy="3" r="3" fill="#e0526a"/><path fill="#fff" d="M9.500 1.500h1v3h-1z"/></symbol>
</svg>

<main class="flex-1 min-h-0 grid grid-cols-2">

<!-- Rhino -->
<section class="min-w-0 flex flex-col bg-[#303030] text-[#cfcfcf] border-x border-[#5a5a5a] overflow-hidden">
    <header class="h-[12px] flex items-center gap-[3px] pl-[2px] pr-[6px] bg-[#3a3a3a] text-[#9a9a9a]">
        <svg class="size-[7px]" viewBox="0 0 12 12"><path fill="#111" d="M0 0h12v12H0z"/><path fill="#eee" d="M1 3l4 2 3-1 3 3-3 4H4L2 7z"/></svg>
        <h1 class="flex-1 pt-px whitespace-nowrap">250715_VA_To_REVIT_集合住宅.3dm (12 MB) - Rhino.Inside 8 Educational - [Top - Floor 1]</h1>
        <button class="w-[4px] h-px bg-[#999]" aria-label="Minimize"></button>
        <button class="ml-[13px] size-[4px] border border-[#888]" aria-label="Maximize"></button>
        <button class="ml-[13px] text-[7px]" aria-label="Close">×</button>
    </header>
    <nav id="rhino-menu" class="h-[9px] flex items-center justify-between pl-[2px] pr-[64px] bg-[#3a3a3a] text-[#e8e8e8]"></nav>
    <div class="h-[23px] pl-[4px] relative bg-[#1a1a1a] text-[#c8c8c8] border-t border-[#4a4a4a] font-['Liberation_Mono','Noto_Sans_CJK_TC',monospace] whitespace-nowrap overflow-hidden">
        <p class="pt-[3px] h-[9px]">Command: _Save</p>
        <p class="h-[5px]">File successfully saved as C:\Users\AJO19\SynologyDrive\SYNC\祥手_VA\250712_VisualARQ_to_RIR\250715_VA_To_REVIT_集合住宅.3dm.</p>
        <p class="mt-px pt-px border-t border-[#555] font-bold text-white flex justify-between pr-[2px]"><label for="cmd">Command:</label><input id="cmd" class="flex-1 outline-none"><span>✥</span></p>
    </div>
    <div class="h-[10px] flex bg-[#464646] pl-[4px] pr-[2px] text-[6px] text-[#858585]">
        <div id="rhino-tabs" class="flex-1 flex items-center justify-between pr-[8px]"></div>
        <button aria-label="Options"><svg class="size-[5px]"><use href="#gear"/></svg></button>
    </div>
    <div id="standard" class="h-[14px] flex items-center justify-between pl-[5px] pr-[9px]"></div>
    <div class="h-[10px] flex items-stretch bg-[#464646] pl-[4px] pr-[2px] text-[6px] text-[#858585]">
        <div class="flex-1 flex items-stretch gap-[7px]">
            <button class="px-[4px] bg-[#303030] text-[#eee]">VisualARQ Objects</button>
            <button class="-ml-[3px]">VisualARQ Edit</button>
            <button>VisualARQ Documentation</button>
            <button>VisualARQ Tools</button>
            <button>VisualARQ Labs</button>
        </div>
        <button aria-label="Options"><svg class="size-[5px]"><use href="#gear"/></svg></button>
    </div>
    <div id="va-objects" class="h-[23px] flex gap-[3px] pt-[1px] pl-[5px] border-b border-[#464646]"></div>

    <div class="flex-1 min-h-0 flex pt-[2px]">
        <aside class="w-[68px] shrink-0 flex flex-col">
            <div class="h-[4px] flex justify-center"><span class="w-[10px] border-t border-dotted border-[#888]"></span></div>
            <div id="tools" class="grid grid-cols-5 w-[58px] gap-y-[3px] pl-[2px] gap-x-[3px]"></div>
            <h2 class="mt-auto h-[8px] flex items-center justify-between pr-[2px] text-[6px] text-[#9a9a9a] bg-[#3c3c3c]">Osnap<svg class="size-[5px]"><use href="#gear"/></svg></h2>
            <div class="h-[9px] flex items-center gap-[10px] pl-[5px] bg-[#3c3c3c]">
                <svg class="size-[6px]"><use href="#circ"/></svg><svg class="size-[6px]"><use href="#wrench"/></svg>
            </div>
            <div id="osnap" class="pt-[2px] pl-[1px] h-[140px] text-[6px] text-[#ddd]"></div>
        </aside>

        <div class="flex-1 min-w-0 flex flex-col border-l border-[#555]">
            <div class="relative flex-1 min-h-0 bg-[#fefefe]">
                <svg class="absolute inset-0 size-full" viewBox="70 103 241 307" preserveAspectRatio="none">
                    <defs>
                        <pattern id="hatch" width="5" height="5" patternUnits="userSpaceOnUse">
                            <path d="M0 0l5 5M5 0L0 5" stroke="#333" stroke-width=".6"/>
                        </pattern>
                    </defs>
                    <path fill="url(#hatch)" d="M96 233h42v22H96zM88 255h50v25H88zM138 249h44v30h-44zM181 207h20v68h-20zM201 213h19v62h-19zM96 282h92v44H96zM188 293h23v33h-23zM188 275h46v18h-46z"/>
                    <g fill="none" stroke="#888" stroke-width="1">
                        <path d="M96 229.500h87M187 230h124M206 235h105M91.500 235v91M88 331.500h200M242 284v42M294 281v46M211 327v12M240 277.500h71M184.500 283v43M100 278h80"/>
                        <path d="M89 262h-7c0 3 2 5 7 6M92 289c-4 0-5 5-1 8M93 320c-5 0-6 5-6 6M222 265h10l1 2h5"/>
                        <path d="M117 243h6v6h-6zM98 268h5v5h-5zM116 257h5v5h-5zM150 264h5v5h-5zM171 263h5v5h-5zM190 220h7v6h-7zM192 263h6v5h-6zM211 244h5v5h-5zM157 294h6v6h-6zM111 304h5v5h-5zM197 308h5v5h-5zM210 283h5v5h-5z" fill="#fff"/>
                    </g>
                    <g fill="none" stroke="#000" stroke-width="2">
                        <path d="M96 232.500h42v46M96 236v19H88.500v36M88 255h50M88 281.500h39M111 255v26M127 256v15M119 281v-8h4v-6h5v-3h10M138 248.500h24M162.500 249v30M138 279.500h44M167 238h7v10M174 248.500h8M181.500 207v72M181 206.500h20M201.500 207v30M201 213.500h19v24M220 221h4M220 237h3v30M220 252h4M181 236h20M183 255h18M127 281v46M96 282v44M188.500 280v47M188 275.500h46M188 293.500h46M234.500 276v51M211 293v34"/>
                        <path stroke-width="2.500" d="M240 238v89M96 327h40M187 327h50"/>
                        <path stroke-width="1.500" d="M240 248.500h43M259.500 249v31M246.500 248v-9h7M283.500 232v48M283 232.500h28M283 263h11v-8h17M294 264h9v8h8M311 255v26M240 280.500h71M294 281v46M138 327h44" />
                        <path stroke-dasharray="14 3" stroke-width="2" d="M240 327h71"/>
                        <path stroke-width="1.500" d="M133.500 327v12.500h155V327"/>
                    </g>
                    <g fill="#fff" stroke="#000" stroke-width="1.500">
                        <path d="M91 229h10v7H91zM178 229h9v8h-9zM235 229h8v8h-8zM91 275h10v7H91zM178 275h10v7h-10zM234 275h9v6h-9zM91 326h10v8H91zM179 326h8v10h-8zM236 326h7v10h-7z"/>
                    </g>
                    <path d="M94 232.500h5M181 232.500h4M237 232.500h4M94 279h5M181 279h4M94 330h5M96.500 225v5M96.500 334v5M182.500 329v4M239.500 329v4" stroke="#666"/>
                    <path fill="none" stroke="#888" d="M85.500 382v12.500H98"/>
                    <path fill="none" stroke="#999" stroke-width="1" d="M257.500 391v3.500h39V391"/><path stroke="#444" d="M265 393.500h8M281 393.500h8"/>
                </svg>
                <button class="absolute left-0 top-0 h-[8px] flex items-center bg-[#0b5be8] text-white text-[6px] pl-[3px]">Top - Floor 1<span class="ml-[3px] px-px border-l border-[#9bbcf5] text-[4px]">▾</span></button>
                <span class="absolute left-[16px] bottom-[27px] text-[6px] text-[#777]">y</span>
                <span class="absolute left-[28px] bottom-[13px] text-[6px] text-[#777]">x</span>
                <span class="absolute right-[42px] bottom-[18px] text-[6px] text-[#555]">5 m</span>
            </div>
            <div class="h-[8px] flex items-center gap-[6px] text-[6px] text-[#7d7d7d] bg-[#3f3f3f]">
                <button class="h-full px-[3px] bg-[#222] text-[#eee] border border-[#666]">Top - Floor 1</button>
                <button class="-ml-[3px]">Perspective</button><button>Front</button><button>Right</button><button class="text-white font-bold">+</button>
            </div>
        </div>

        <aside class="w-[78px] shrink-0 flex flex-col text-[6px] border-l border-[#444]">
            <h2 class="h-[8px] pl-[1px] flex items-center text-[#8a8a8a] bg-[#3c3c3c]">Properties: Viewport</h2>
            <div class="h-[17px] flex items-center gap-[3px] pl-[3px]">
                <span class="size-[12px] bg-[#1d3f78] border border-[#5f8fd0] flex items-center justify-center"><svg class="size-[9px]"><use href="#cam"/></svg></span>
                <svg class="size-[10px]"><use href="#frame"/></svg>
                <svg class="ml-[2px] size-[10px]"><use href="#joint"/></svg>
            </div>
            <div id="viewport-props" class="pl-[2px] pr-[2px]"></div>
        </aside>
        <div class="w-[9px] shrink-0 flex flex-col items-center gap-[5px] pt-[1px] bg-[#3c3c3c] border-l border-[#222]">
            <svg class="size-[5px]"><use href="#gear"/></svg>
            <div id="side" class="flex flex-col gap-[8px]"></div>
        </div>
    </div>

    <footer class="h-[12px] flex items-center pl-[3px] text-[6px] text-[#b5b5b5] bg-[#333] border-b border-[#555] whitespace-nowrap">
        <span class="w-[14px]"><svg class="size-[7px]" viewBox="0 0 12 12"><path fill="none" stroke="#ddd" stroke-width="1.500" d="M1 1h10v10H1z"/><path fill="#ddd" d="M2 2h4v8H2z"/></svg></span>
        <span class="w-[27px]">CPlane</span><span class="w-[84px]">x -15743.319 &nbsp;y 10803.401</span><span class="w-[28px]">z 0</span><span class="w-[37px]">Millimeters</span>
        <span class="size-[7px] mr-[2px] bg-black border border-[#ccc]"></span><span>Default</span>
        <span class="ml-auto flex items-center gap-[6px] h-full">
            <button>Grid Snap</button><button>Ortho</button><button>Planar</button>
            <button class="h-[8px] px-[3px] -mx-[2px] bg-[#2c4f94] text-white font-bold">Osnap</button>
            <button class="h-[8px] px-px bg-[#2c4f94] text-white">Sr</button>
            <svg class="-ml-[4px] mr-[2px] size-[7px]" viewBox="0 0 12 12"><path fill="none" stroke="#ddd" stroke-width="1.500" d="M1 1h10v10H1z"/><path fill="#ddd" d="M6 2h4v8H6z"/></svg>
        </span>
    </footer>
</section>

<div class="min-w-0 min-h-0 flex flex-col pl-[1px] bg-[#777]">

<!-- Revit -->
<section class="h-[216px] shrink-0 flex flex-col bg-[#ededed] text-[#333] overflow-hidden">
    <header class="h-[13px] flex items-center bg-[#dadadb] pl-[2px] pr-[4px]">
        <div id="quick" class="w-[200px] flex items-center justify-between"></div>
        <h1 class="ml-[5px] w-[42px] whitespace-nowrap">Project1 - Floor...</h1>
        <span class="text-[4px] mr-[4px]">◂</span>
        <svg class="size-[8px]"><use href="#bino"/></svg>
        <svg class="ml-[3px] size-[7px]"><use href="#user"/></svg>
        <button class="ml-[2px]">Sign In</button>
        <span class="ml-[19px] text-[4px]">▾</span>
        <svg class="ml-[4px] size-[7px]"><use href="#cart"/></svg>
        <svg class="ml-[7px] size-[8px]"><use href="#lhelp"/></svg>
        <span class="ml-[2px] text-[4px]">▾</span>
        <button class="ml-auto w-[4px] h-[4px] border-b border-black" aria-label="Minimize"></button>
        <button class="ml-[6px] size-[5px] border border-black" aria-label="Maximize"></button>
        <button class="ml-[6px] text-[7px] text-black" aria-label="Close">✕</button>
    </header>
    <nav id="revit-tabs" class="h-[9px] flex items-center justify-between pr-[17px] bg-[#d3d3d5]"></nav>
    <div class="h-[40px] flex bg-[#f3f3f3] border-b border-[#ccc]">
        <div class="w-[27px] pl-[3px] pt-[2px] flex flex-col">
            <button class="w-[20px] h-[30px] flex flex-col items-center gap-[5px] pt-[3px] bg-[#b9dbf2] border border-[#6fb1df]"><svg class="size-[9px]" viewBox="0 0 12 12"><path fill="#fff" stroke="#333" d="M3 1l6 6H6l1 4-2 0-1-3-1 1z"/></svg>Modify</button>
            <span class="pt-px">Select ▾</span>
        </div>
        <div class="w-[161px] flex flex-col items-center border-x border-[#d8d8d8] pt-[2px]">
            <div class="w-full flex-1 flex pl-[3px]">
                <button class="w-[16px] flex flex-col items-center gap-[2px]"><svg class="w-[12px] h-[14px]"><use href="#wall"/></svg>Wall<span class="text-[4px]">▾</span></button>
                <button class="w-[18px] flex flex-col items-center gap-[2px]"><svg class="w-[11px] h-[14px]"><use href="#door"/></svg>Door</button>
                <div id="build1" class="w-[46px] flex flex-col"></div>
                <div id="build2" class="w-[30px] flex flex-col"></div>
                <div id="build3" class="flex-1 flex flex-col"></div>
            </div>
            <span class="h-[7px]">Build</span>
        </div>
        <div class="w-[38px] flex flex-col items-center border-r border-[#d8d8d8] pt-[2px]"><div id="circ-col" class="flex-1 w-full pl-[3px] flex flex-col"></div><span class="h-[7px]">Circulation</span></div>
        <div class="w-[20px] flex flex-col items-center border-r border-[#d8d8d8] pt-[2px]"><div id="model-col" class="flex-1 flex flex-col"></div><span class="h-[7px]">Model</span></div>
        <div class="w-[41px] flex flex-col items-center border-r border-[#d8d8d8] pt-[2px]">
            <div class="flex-1 flex gap-[7px]"><div id="room-col" class="flex flex-col"></div><div id="area-col" class="flex flex-col"></div></div><span class="h-[7px] whitespace-nowrap">Room &amp; Area ▾</span></div>
        <div class="w-[45px] flex flex-col items-center border-r border-[#d8d8d8] pt-[2px]">
            <div class="w-full flex-1 flex justify-around">
                <button class="flex flex-col items-center gap-px"><svg class="w-[12px] h-[14px]"><use href="#byface"/></svg>By<br>Face</button>
                <button class="flex flex-col items-center gap-[2px]"><svg class="w-[12px] h-[14px]"><use href="#shaft"/></svg>Shaft</button>
                <div id="open-col" class="flex flex-col"></div>
            </div>
            <span class="h-[7px]">Opening</span></div>
        <div class="w-[20px] flex flex-col items-center border-r border-[#d8d8d8] pt-[2px]"><div class="flex-1 flex flex-col justify-center gap-[4px]"><span class="text-[#999]">-⊙</span><svg class="size-[8px]"><use href="#grids"/></svg></div><span class="h-[7px]">Datum</span></div>
        <div class="w-[29px] flex flex-col items-center pt-[2px]">
            <div class="flex-1 flex gap-[5px]"><button class="flex flex-col items-center gap-[2px]"><svg class="w-[12px] h-[14px]"><use href="#wset"/></svg>Set<span class="text-[4px]">▾</span></button><div id="work-col" class="flex flex-col"></div></div>
            <span class="h-[7px] whitespace-nowrap">Work Plane</span></div>
    </div>
    <div class="h-[11px] bg-[#efefef] border-b border-[#bbb]"></div>
    <div class="flex-1 min-h-0 flex pt-px">
        <aside class="w-[92px] shrink-0 flex flex-col pl-[1px] bg-[#f0f0f0]">
            <h2 class="h-[9px] shrink-0 flex items-center justify-between pl-px pr-[2px]">Properties<button class="text-black" aria-label="Close">✕</button></h2>
            <div class="h-[28px] shrink-0 flex items-center pl-px pr-[2px] border border-[#ddd] bg-[#f6f6f6]">
                <span class="w-[27px] h-full flex items-center justify-center bg-[#e9e9e9]"><svg class="size-[15px]"><use href="#pages"/></svg></span>
                <span class="pl-[2px] flex-1">Floor Plan</span><span class="text-[4px]">▾</span>
            </div>
            <div class="h-[12px] shrink-0 flex items-center gap-[3px]">
                <select aria-label="Type" class="w-[53px] h-[8px] appearance-none bg-white border border-[#aaa] pl-px"><option>Floor Plan: Level 1 &nbsp;⌄</option></select>
                <svg class="size-[7px]"><use href="#cw"/></svg><button>Edit Type</button>
            </div>
            <div class="flex-1 min-h-0 flex gap-[4px] overflow-hidden">
                <div class="w-[83px]">
                    <h3 class="h-[6px] flex items-center justify-between px-[1px] pr-[3px] bg-[#d4d4d4] font-bold">Graphics<span>⌃</span></h3>
                    <table class="w-full table-fixed bg-white"><tbody id="rprops"></tbody></table>
                </div>
                <span class="mt-[6px] w-px bg-[#888]"></span>
            </div>
        </aside>
        <div class="flex-1 min-w-0 flex flex-col bg-white border-l border-[#bbb]">
            <div class="h-[8px] flex items-center justify-between bg-[#c9c9c9] pr-[2px]">
                <span class="w-[53px] h-full flex items-center gap-[3px] pl-[2px] bg-white"><svg class="size-[6px]"><use href="#pages"/></svg><span class="flex-1">Level 1</span><button class="mr-[2px]" aria-label="Close view">✕</button></span><span>▾</span>
            </div>
            <div class="relative flex-1 border-r-[8px] border-[#eee]">
                <span class="absolute left-[75px] top-[19px] size-[3px] rounded-full border border-[#333]"></span>
                <span class="absolute left-[34px] top-[60px] size-[3px] rounded-full border border-[#333]"></span>
                <span class="absolute left-[116px] top-[60px] size-[3px] rounded-full border border-[#333]"></span>
                <span class="absolute left-[75px] top-[101px] size-[3px] rounded-full border border-[#333]"></span>
                <div class="absolute right-[1px] top-[1px] w-[14px] h-[49px] flex flex-col items-center justify-between py-[9px] rounded-[3px] bg-[#f0f0f0] border border-[#aaa]">
                    <svg class="size-[10px]" viewBox="0 0 12 12"><circle cx="6" cy="6" r="5" fill="#fff" stroke="#999"/><circle cx="6" cy="6" r="2" fill="#ccd" stroke="#999"/><path fill="#58b" d="M8 9h4v2H8z"/></svg>
                    <svg class="size-[8px]" viewBox="0 0 12 12"><path fill="#8fc48a" stroke="#777" d="M1 1h7v7H1z"/><path stroke="#777" stroke-width="2" d="M7 7l4 4"/></svg>
                </div>
            </div>
        </div>
        <aside class="w-[142px] shrink-0 flex flex-col bg-white border-l border-[#aaa]">
            <h2 class="h-[9px] shrink-0 flex items-center justify-between pl-[2px] pr-[2px] bg-[#f0f0f0]">Project Browser - Project1<button class="text-black" aria-label="Close">✕</button></h2>
            <div class="flex-1 min-h-0 flex">
                <ul id="tree" class="flex-1 pl-[10px] overflow-hidden"></ul>
                <span class="self-end w-px h-[45px] mr-[3px] bg-[#888]"></span>
            </div>
        </aside>
    </div>
</section>

<!-- Grasshopper -->
<section class="flex-1 min-h-0 flex flex-col mt-px bg-[#f0f0f0] text-[#333] overflow-hidden">
    <header class="h-[11px] flex items-center pl-[3px] pr-[7px] bg-[#f6f6f6] text-[#888]">
        <h1 class="flex-1">Grasshopper - 250717_VA_objects_to_RIR</h1>
        <button class="w-[4px] h-px bg-[#888]" aria-label="Minimize"></button>
        <button class="ml-[14px] size-[4px] border border-[#888]" aria-label="Maximize"></button>
        <button class="ml-[15px] text-[7px]" aria-label="Close">×</button>
    </header>
    <div class="h-[12px] flex items-center justify-between pl-[5px] pr-[4px] bg-white text-[6px] text-[#333]">
        <nav id="gh-menu" class="w-[171px] flex justify-between"></nav>
        <span class="text-[5px] text-black">250717_VA_objects_to_RIR</span>
    </div>
    <nav class="h-[9px] flex items-center pr-[5px] font-['Liberation_Serif',serif] text-[#666] border-b border-[#bbb]">
        <div id="gh-tabs" class="w-[197px] h-full flex items-center justify-between"></div>
        <div id="gh-tabs-short" class="flex-1 pl-[6px] flex items-center justify-between"></div>
    </nav>
    <div id="gh-ribbon" class="h-[81px] flex items-start gap-[2px] pl-px pt-[1px] bg-[#e4e4e4] border-b border-[#bbb]"></div>
    <div class="h-[14px] flex items-center gap-[4px] pl-[1px] pr-[2px] bg-[#f7f7f7]">
        <svg class="size-[9px]"><use href="#gopen"/></svg>
        <svg class="size-[9px]"><use href="#gsave"/></svg>
        <select aria-label="Zoom" class="ml-[1px] w-[57px] h-[9px] appearance-none bg-white border border-[#bbb] pl-[1px]"><option>52%</option></select>
        <svg class="-ml-[2px] size-[10px]"><use href="#gzoom"/></svg><span class="text-[4px]">▾</span>
        <svg class="w-[11px] h-[9px]"><use href="#eye"/></svg><span class="text-[4px]">▾</span>
        <svg class="size-[9px]"><use href="#pen"/></svg>
        <span class="ml-auto"></span>
        <svg class="size-[9px]"><use href="#bw"/></svg>
        <svg class="size-[9px]"><use href="#wire"/></svg>
        <span class="size-[11px] flex items-center justify-center border border-[#7db8e8] bg-[#d9ecfb]"><svg class="size-[9px]"><use href="#redg"/></svg></span>
        <span class="w-px h-[9px] ml-[3px] mr-px bg-[#ccc]"></span>
        <svg class="size-[9px]"><use href="#teal"/></svg>
        <span class="size-[11px] -mx-[2px] flex items-center justify-center border border-[#7db8e8] bg-[#d9ecfb]"><svg class="size-[9px]"><use href="#green"/></svg></span>
        <svg class="size-[9px]"><use href="#half"/></svg>
        <svg class="ml-px size-[9px]"><use href="#bball"/></svg><span class="-ml-[2px] text-[4px]">▾</span>
    </div>
    <div class="flex-1 min-h-0 flex">
        <div class="w-[70px] shrink-0 flex items-end bg-[#cdc9c4] border-r border-[#999]">
            <div class="w-[62px] h-[12px] flex items-center gap-[3px] px-px bg-gradient-to-b from-[#aaa] to-[#777]">
                <svg class="size-[9px]"><use href="#yel"/></svg>
                <svg class="size-[9px]" viewBox="0 0 12 12"><path fill="#222" d="M1 8l3-4 2 1 3-3 2 2-3 4-2-1-3 4z"/></svg>
                <svg class="size-[9px]" viewBox="0 0 12 12"><path fill="#222" d="M1 2h10v9H1z"/><path stroke="#d33" stroke-width="2" stroke-dasharray="1 1" d="M1 2h10"/><path stroke="#eee" d="M3 6l2 1-2 1"/></svg>
                <svg class="size-[9px]"><use href="#teal"/></svg>
                <svg class="size-[9px]" viewBox="0 0 12 12"><path fill="#f5e2c8" stroke="#8a5a30" d="M1 3h10v7H1zM1 6h10M4 3v7M8 3v7"/></svg>
            </div>
        </div>
        <div class="relative flex-1 min-w-0 bg-[#b092f4] overflow-hidden">
            <svg class="absolute inset-0 size-full" viewBox="471 345 329 74" preserveAspectRatio="none">
                <g fill="none" stroke="#3a5fb5" stroke-dasharray="1 2"><path d="M473.500 345v74M568.500 345v74"/></g>
                <g fill="none" stroke="#e0455e" stroke-width="1" stroke-dasharray="2 1">
                    <path d="M487 366.500L611 365M637 359l89-2M746 355l54-3M746 363h54M637 372c8 0 3 27 10 27M746 356c18 0 8 22-8 32M726 360c-6 4-2 8-4 12M721 393c15-2 14 3 29 3M675 390l6-4"/>
                </g>
                <g fill="#f99526" stroke="#8a4a3a" stroke-dasharray="2 1">
                    <path d="M475.500 364.500h11v4h-11zM611.500 351.500h25v28h-25zM726.500 350.500h20v18h-20zM681.500 367.500h39v35h-39zM647.500 380.500h27v40h-27zM750.500 384.500h38v40h-38zM796.500 376.500h8v27h-8z"/>
                </g>
                <path fill="#25242a" d="M619 351h6v28h-6zM732 350h6v18h-6zM689 367h6v36h-6zM658 380h6v39h-6zM757 384h6v35h-6z"/>
                <circle cx="659" cy="345" r="2.500" fill="#ddd" stroke="#555"/>
            </svg>
            <div class="absolute right-0 bottom-[3px] w-[158px] h-[41px] bg-[#3f3a48]/65 text-white/85">
                <svg class="absolute left-0 top-0 w-[55px] h-full" viewBox="0 0 55 41"><path fill="none" stroke="#fff" stroke-opacity=".85" stroke-width="2" d="M7 6v31M18 7h5l10 30h10V16M46 10h6M49 7v6"/><circle cx="17" cy="21" r="3" fill="#ddd"/></svg>
                <span class="absolute right-[6px] top-[5px] text-[8px]">加號設計數位工程有限公司</span>
                <span class="absolute right-[4px] top-[15px] text-[29px] leading-[24px] font-light">.DESIGN</span>
                <span class="absolute right-[4px] bottom-[1px] size-[17px] rounded-full bg-[#777]/60 border border-[#222]"></span>
            </div>
        </div>
    </div>
    <footer class="h-[11px] flex items-center justify-between pl-[2px] pr-[12px] bg-[#f3f3f3]">
        <span class="flex items-center gap-[2px]"><svg class="size-[6px]"><use href="#bball"/></svg>Save successfully completed... (3 seconds ago)</span>
        <span class="text-[#999]">1.0.0008</span>
    </footer>
</section>
</div>
</main>

<!-- Taskbar -->
<footer class="h-[20px] shrink-0 flex items-center justify-between pl-[5px] pr-[8px] bg-[#201f1d] text-[#eee]">
    <div id="taskbar" class="w-[238px] flex justify-between"></div>
    <div class="flex items-center">
        <svg class="size-[13px]"><use href="#tweather"/></svg>
        <span class="ml-px w-[54px] leading-[7px]">31°C<br>多雲時晴</span>
        <span class="w-[14px] text-[6px]">⌃</span><span class="w-[17px] text-[6px]">英</span><span class="w-[14px] text-[6px]">ㄅ</span>
        <svg class="size-[8px] mr-[2px]"><use href="#tcast"/></svg>
        <svg class="size-[8px] mr-[2px]"><use href="#tvol"/></svg>
        <svg class="size-[8px] mr-[6px]"><use href="#tbat"/></svg>
        <span class="text-right leading-[7px]">下午 06:11<br>2025/7/17</span>
        <svg class="ml-[3px] size-[7px]"><use href="#tbell"/></svg>
    </div>
</footer>

<script>
    const $ = id => document.getElementById(id);
    const fill = (id, list, fn) => { $(id).innerHTML = list.map(fn).join(''); };
    const use = (name, cls) => `<svg class="${cls}"><use href="#${name}"/></svg>`;
    const btn = t => `<button>${t}</button>`;

    fill('rhino-menu', ['File','Edit','View','Curve','Surface','SubD','Solid','Mesh','Drafting','Transform','Tools','Analyze','Render','VisualARQ','Window','Help'], btn);
    fill('rhino-tabs', ['Stan...','CPl...','Set...','Dis...','Sel...','Viewport...','Visi...','Trans...','Curve...','Surface...','Solid...','SubD...','Mesh...','Render...','Draf...','New...'],
        (t, i) => i ? btn(t) : `<button class="h-full px-[4px] bg-[#303030] text-[#eee]">${t}</button>`);
    fill('standard', 'new open save print docprops cut copy paste undo hand orbit mag magbox magall magsel undo grid4 car plane circ curvesel bulb lock layers wheel ball mesh blue spot gearY dim green help'.split(' '), n => use(n, 'size-[9px]'));
    fill('va-objects', [1,2,3,4,5,6,7,8,9,10,11,12], n => use('va' + n, 'size-[9px]'));
    fill('tools', 'arrow point poly ctrl circ ell tri rect circ arc srf srf2 cube balls cyl srf puz fire trim trim dots balls arc nodes tee nodes nodesB wrench cube bars array red3 bluepg mesh check cap cone'.split(' '), n => use(n, 'size-[9px]'));
    fill('side', 'layers wheel new frame blue cam nodesB'.split(' '), n => use(n, 'size-[7px]'));
    const box = 'size-[6px] appearance-none border border-[#8a8a8a] bg-[#4a4a4a] checked:bg-[#e6e6e6]';
    const tick = '<span class="absolute left-[1px] text-[5px] text-black pointer-events-none">✓</span>';
    fill('osnap', ['End','Near','Point','Mid','Cen','Int','Perp','Tan','Quad','Knot','Vertex','Project','','Disable'], t => t
        ? `<label class="relative h-[7px] flex items-center gap-[3px]"><input type="checkbox" class="${box}" ${['End','Mid','Int'].includes(t) ? 'checked' : ''}>${['End','Mid','Int'].includes(t) ? tick : ''}${t}</label>`
        : '<div class="h-[7px]"></div>');

    // [label, value, kind]; a lone label is a section heading
    const rows = [['Viewport'],['Title','Top - Floor'],['Width','578','num'],['Height','736','num'],['Projection','Parallel','sel'],['Display mod','Hidden','sel'],['Locked','','chk'],
        ['Camera'],['Lens Length','16.077','off'],['Rotation','0.0','num'],['X Location','-1867.39','num'],['Y Location','3628.017','num'],['Z Location','24222.87','num'],['Distance to 1','24222.872'],['Location','Place...','btn'],
        ['Target'],['X Target','-1867.39','num'],['Y Target','3628.017','num'],['Z Target','0.000','num'],['Location','Place...','btn'],
        ['Wallpaper'],['Filename','(none)','file'],['Show','1','chk'],['Gray','1','chk']];
    fill('viewport-props', rows, ([l, v, k], i) => {
        if (v === undefined) return `<h3 class="h-[11px] flex items-center text-[7px] text-[#e4e4e4]">${l}</h3>`;
        const f = {
            sel: `<select id="p${i}" class="w-[33px] h-[8px] appearance-none bg-[#474747] pl-[2px]"><option>${v}</option></select><span class="absolute right-[3px] text-[4px]">▾</span>`,
            chk: `<input id="p${i}" type="checkbox" class="${box}" ${v ? 'checked' : ''}>${v ? '<span class="absolute left-[40px] text-[5px] text-black pointer-events-none">✓</span>' : ''}`,
            btn: `<button id="p${i}" class="w-[33px] h-[8px] border border-[#555] text-[#aaa]">${v}</button>`,
            file: `<input id="p${i}" class="w-[23px] h-[8px] bg-[#474747] pl-[1px] text-[#888] border border-[#666]" value="${v}"><button class="w-[10px] h-[8px] border border-[#555]">...</button>`,
        }[k] || `<input id="p${i}" class="w-[33px] h-[8px] bg-[#474747] pl-[2px] ${k === 'off' ? 'text-[#666]' : ''}" value="${v}">${k ? '<svg class="absolute right-[1px] w-[4px] h-[8px] bg-[#474747]" viewBox="0 0 4 8"><path fill="#ddd" d="M2 1l1.500 2h-3zM2 7l1.500-2h-3z"/></svg>' : ''}`;
        const h = k === 'sel' || k === 'btn' || k === 'file' || l === 'Locked' ? 'h-[10px]' : 'h-[9px]';
        return `<div class="relative ${h} flex items-center border-b border-[#3d3d3d]"><label for="p${i}" class="w-[39px] shrink-0 pl-[5px] whitespace-nowrap">${l}</label>${f}</div>`;
    });

    fill('quick', 'rlogo home lopen lsave lcube lundo lredo lprint pdf meas ruler lline tag letA lcube sect'.split(' '), n => use(n, 'size-[7px]') + (/lcube|lundo|lredo|ruler/.test(n) ? '<span class="text-[3px]">▾</span>' : ''));
    fill('revit-tabs', ['File','Architecture','Structure','Steel','Precast','Systems','Insert','Annotate','Analyze','Massing & Site','Collaborate','View','Manage','» ◘ ▾'],
        (t, i) => `<button class="h-full ${i == 0 ? 'w-[19px] bg-[#2b6cb0] text-white' : i == 1 ? 'px-[2px] -mx-[4px] bg-[#f3f3f3] text-black' : ''}">${t}</button>`);
    const cell = ([n, t]) => `<button class="h-[10px] flex items-center gap-[3px] whitespace-nowrap">${use(n, 'size-[7px]')}${t || ''}</button>`;
    fill('build1', [['win','Window'],['comp','Component ▾'],['col','Column ▾']], cell);
    fill('build2', [['cw','Roof ▾'],['ceil','Ceiling'],['ceil','Floor ▾']], cell);
    fill('build3', [['cw','Curtain System'],['cw','Curtain Grid'],['cw','Mullion']], cell);
    fill('circ-col', [['rail','Railing ▾'],['ramp','Ramp'],['stair','Stair']], cell);
    fill('model-col', [['mtext'],['mline'],['mgrp']], cell);
    fill('room-col', [['room'],['room'],['room']], cell);
    fill('area-col', [['area'],['tagg'],['area']], cell);
    fill('open-col', [['dorm'],['dorm'],['rail']], cell);
    fill('work-col', [['wshow'],['ceil'],['wview']], cell);
    fill('rprops', [['View Scale','1 : 100'],['Scale Value ...','100'],['Display Model','Normal'],['Detail Level','Coarse'],['Parts Visibility','Show Original'],['Visibility/Gra...','Edit...'],['Graphic Displ...','Edit...'],['Orientation','Project North'],['Wall Join Dis...','Clean all wall j...'],['Discipline','Architectural'],['Show Hidde...','By Discipline']],
        ([a, b], i) => `<tr class="${i % 2 ? 'h-[7px]' : 'h-[8px]'} border-b border-[#ddd] whitespace-nowrap ${i == 1 ? 'text-[#999]' : 'text-[#222]'}"><th class="w-[38px] pl-[3px] text-left font-normal overflow-hidden">${a}</th><td class="w-[39px] pl-[2px] border-x border-[#ddd] overflow-hidden ${i == 0 ? 'outline outline-[#333]' : ''} ${b == 'Edit...' ? 'text-center bg-[#f4f4f4]' : ''}">${b}</td><td></td></tr>`);
    fill('tree', [['Columns',0],['M_Rectangular Column',1],['457 x 475mm',2],['475 x 610mm',2],['610 x 610mm',2]].concat(['Conduits','Curtain Panels','Curtain Systems','Curtain Wall Mullions','Detail Items','Division Profiles','Doors','Duct Systems','Ducts','Flex Ducts','Flex Pipes','Floors','Furniture'].map(t => [t, 0])),
        ([t, d], i) => `<li class="${i % 2 ? 'h-[7px]' : 'h-[8px]'} flex items-center whitespace-nowrap ${['', 'pl-[9px]', 'pl-[19px]'][d]}">${d < 2 ? `<span class="size-[4px] border border-[#999] text-[4px] leading-[2px] text-center">${i < 2 ? '-' : '+'}</span>` : ''}<span class="w-[4px] h-px mr-px border-t border-dotted border-[#aaa]"></span><span class="${d == 1 ? 'bg-[#dcdcdc] text-black' : ''}">${t}</span></li>`);

    fill('gh-menu', ['File','Edit','View','Display','Solution','Help','Pancake','eleFront'], btn);
    fill('gh-tabs', ['Prm','Math','Set','Vec','Crv','Srf','Msh','Int','Trns','Dis','Rh','Kn²','VisualARQ'],
        (t, i) => `<button class="${i ? '' : 'h-full px-[2px] bg-white border border-b-0 border-[#bbb] font-bold text-black'}">${t}</button>`);
    fill('gh-tabs-short', 'RPHeWRLEDPHLEWLEH'.split(''), btn);
    const panels = [
        ['Geometry', 'w-[45px]', ['h1 h2','h3 h5 h2 h2 h3 h2','h6 h4 h4 h4']],
        ['Primitive', 'w-[29px]', ['h6 h5 h3 h4 h7','h8']],
        ['Input', 'w-[45px]', ['g1 yel','g2 g3 g1 g4 g5','pink grn']],
        ['Rhino', 'w-[29px]', ['hrb hor','hor h8']],
        ['Util', 'w-[45px]', ['cherry tree1','arrD arrL','skull flask']],
        ['Architectural inputs', 'w-[45px]', ['ai1 ai1 ai2','ai2 ai2 ai2','ai3 ai3 ai3']],
        ['Architectural objects', 'w-[37px]', ['ao3 ao1 ao2 ao1 ao3 ao4','ao2 ao3 ao3 ao2 ao2 ao1','ao3 ao4 ao1 ao4 ao1 ao1']],
        ['Architectural styles', 'w-[37px]', ['ao3 ao1 ao2 ao1 ao3 ao4','ao2 ao3 ao3 ao2 ao4 ao1','ao3 ao4 ao1 ao4 ao1 ao1']],
        ['Revit', 'w-[28px]', ['rv2 rv2 rv1 rv2','rv1 rv1 rv1 rv1 rv3 rv1']],
        ['Revit Elements', 'w-[29px]', ['rv3 rv3 rv3 rv3 rv3 rv3','rv4 rv4 rv4 rv4']],
    ];
    fill('gh-ribbon', panels, ([t, w, cols]) => `<section class="${w} shrink-0 rounded-[2px] border border-[#c4c4c4] bg-[#ebebeb]"><div class="flex justify-around">${cols.map(c => `<div class="flex flex-col gap-[2px]">${c.split(' ').map(n => use(n, 'size-[10px]')).join('')}</div>`).join('')}</div><h3 class="h-[5px] flex items-center justify-center overflow-hidden whitespace-nowrap bg-[#1b1b1b] text-[#ddd] text-[4px] font-['Liberation_Serif',serif]">${t}</h3></section>`);

    fill('taskbar', 'tstart tsearch ttask tfold tedge tstore tL tnote tcop tbrave tline trevit tobs'.split(' '), n => `<button class="size-[18px] flex flex-col items-center justify-center rounded-[2px] ${n == 'tobs' ? 'bg-[#3a3937]' : ''}" aria-label="${n.slice(1)}">${use(n, 'size-[11px]')}</button>`);
</script>
</body>
</html>
